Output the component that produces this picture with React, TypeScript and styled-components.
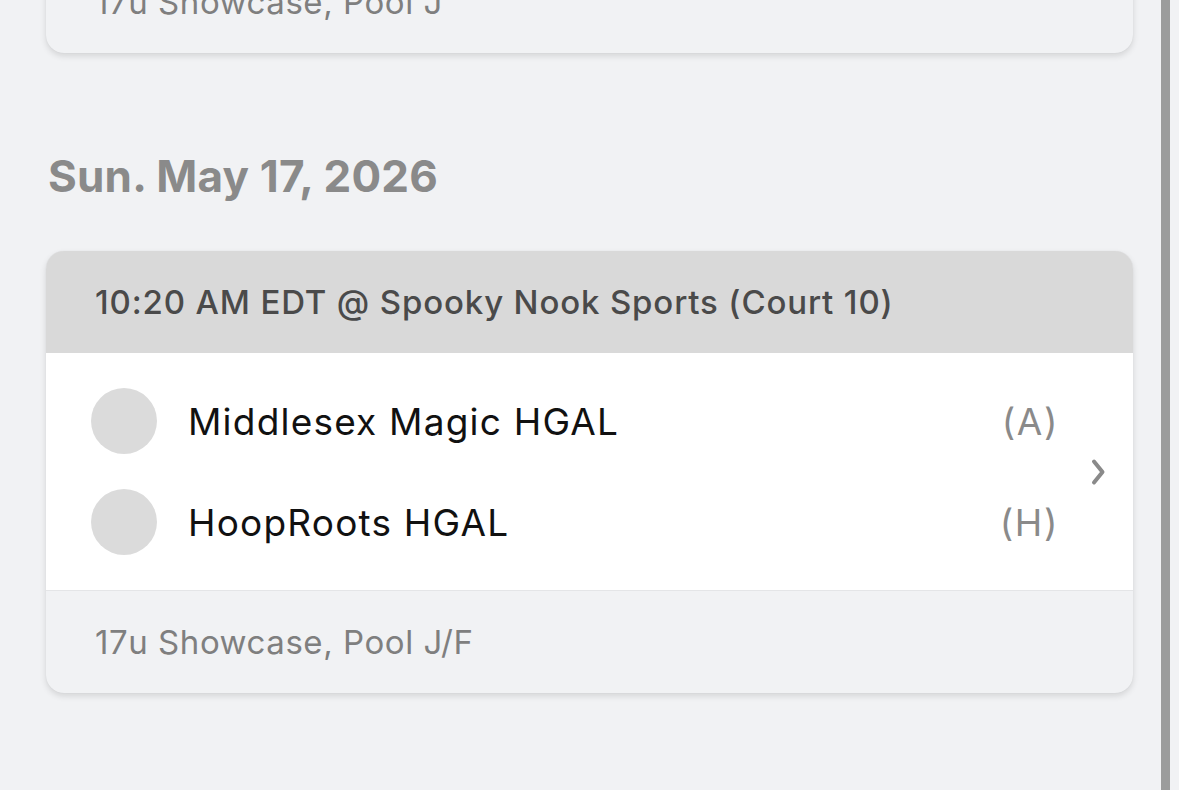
import React from "react";
import styled, { createGlobalStyle } from "styled-components";

const Global = createGlobalStyle`
  html, body { margin: 0; padding: 0; background: #f1f2f4; overflow: hidden; }
  body { font-family: Inter, "Noto Sans", "Liberation Sans", sans-serif; }
`;

const Screen = styled.div`
  display: flex;
  height: 790px;
  overflow: hidden;
`;

const Main = styled.div`
  flex: 1;
  overflow: hidden;
`;

const Scroller = styled.div`
  margin-top: -389px;
  padding: 0 28px 0 46px;
  display: flex;
  flex-direction: column;
`;

const ScrollTrack = styled.div`
  width: 9px;
  background: #9b9c9c;
  margin-right: 9px;
`;

const DateHeading = styled.h2`
  margin: 97px 0 48px 2px;
  font-size: 44px;
  line-height: 53px;
  font-weight: 700;
  color: #8a8a8a;
  letter-spacing: 0.2px;
`;

const Card = styled.div`
  border-radius: 18px;
  overflow: hidden;
  background: #f1f2f4;
  box-shadow: 0 3px 6px rgba(0, 0, 0, 0.12), 0 0 1px rgba(0, 0, 0, 0.1);
`;

const CardHeader = styled.div`
  height: 102px;
  background: #d9d9d9;
  display: flex;
  align-items: center;
  padding-left: 49px;
  font-size: 33px;
  letter-spacing: 0.85px;
  font-weight: 500;
  color: #4a4a4a;
`;

const CardBody = styled.div`
  background: #ffffff;
  display: flex;
  align-items: center;
  padding: 35px 26px 35px 45px;
  gap: 30px;
`;

const Teams = styled.div`
  flex: 1;
  display: flex;
  flex-direction: column;
  gap: 35px;
`;

const TeamRow = styled.div`
  display: flex;
  align-items: center;
  height: 66px;
`;

const Avatar = styled.div`
  width: 66px;
  height: 66px;
  border-radius: 50%;
  background: #dbdbdb;
  flex: none;
`;

const TeamName = styled.div`
  flex: 1;
  margin-left: 31px;
  font-size: 37px;
  letter-spacing: 1.2px;
  color: #111111;
`;

const Side = styled.div`
  font-size: 37px;
  letter-spacing: 1.6px;
  color: #8a8a8a;
`;

const Chevron = styled.svg`
  width: 18px;
  height: 28px;
  flex: none;
`;

const CardFooter = styled.div`
  height: 103px;
  border-top: 1px solid #e4e5e7;
  box-sizing: border-box;
  display: flex;
  align-items: center;
  padding-left: 49px;
  font-size: 33px;
  letter-spacing: 0.55px;
  color: #7f7f7f;
`;

type Game = {
  time: string;
  away: string;
  home: string;
  pool: string;
};

const GameCard = ({ game }: { game: Game }) => (
  <Card>
    <CardHeader>{game.time}</CardHeader>
    <CardBody>
      <Teams>
        <TeamRow>
          <Avatar />
          <TeamName>{game.away}</TeamName>
          <Side>(A)</Side>
        </TeamRow>
        <TeamRow>
          <Avatar />
          <TeamName>{game.home}</TeamName>
          <Side>(H)</Side>
        </TeamRow>
      </Teams>
      <Chevron viewBox="0 0 18 28">
        <path d="M5 3.5 L13.5 14 L5 24.5" fill="none" stroke="#8a8a8a" strokeWidth="4" strokeLinecap="round" strokeLinejoin="round" />
      </Chevron>
    </CardBody>
    <CardFooter>{game.pool}</CardFooter>
  </Card>
);

export default function App() {
  return (
    <>
      <Global />
      <Screen>
        <Main>
          <Scroller>
            <GameCard
              game={{
                time: "3:40 PM EDT @ Spooky Nook Sports (Court 12)",
                away: "HoopRoots HGAL",
                home: "Lady Rebels",
                pool: "17u Showcase, Pool J",
              }}
            />
            <DateHeading>Sun. May 17, 2026</DateHeading>
            <GameCard
              game={{
                time: "10:20 AM EDT @ Spooky Nook Sports (Court 10)",
                away: "Middlesex Magic HGAL",
                home: "HoopRoots HGAL",
                pool: "17u Showcase, Pool J/F",
              }}
            />
          </Scroller>
        </Main>
        <ScrollTrack />
      </Screen>
    </>
  );
}
